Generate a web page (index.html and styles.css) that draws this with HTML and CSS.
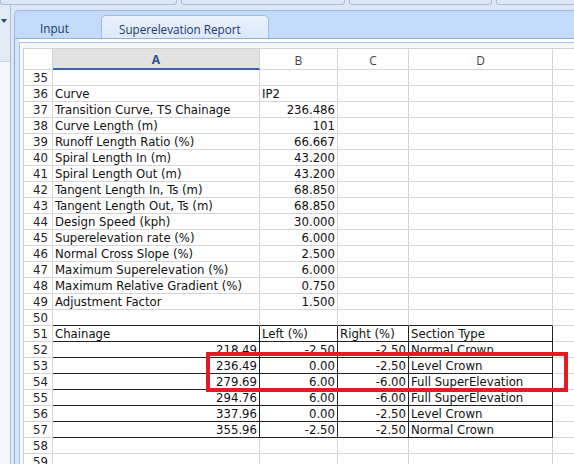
FILE: index.html
```html
<!DOCTYPE html>
<html lang="en">

<head>
	<meta charset="UTF-8">
	<title>Superelevation Report</title>
	<link rel="stylesheet" href="styles.css">
</head>

<body>

	<div class="topbar">
		<span class="top-btn btn-1"></span>
		<span class="top-btn btn-2"></span>
		<span class="top-btn btn-3"></span>
		<span class="top-btn btn-4"></span>
	</div>

	<div class="main">
		<aside class="side-panel">
			<div class="side-head"><span class="side-arrow"></span></div>
		</aside>

		<div class="workspace">
			<div class="tabstrip">
				<div class="tab tab-input">Input</div>
				<div class="tab tab-active">Superelevation Report</div>
			</div>

			<div class="sheet-frame">
				<div class="sheet-box">
					<table class="grid">
						<colgroup>
							<col class="col-rh">
							<col class="col-a">
							<col class="col-b">
							<col class="col-c">
							<col class="col-d">
							<col>
						</colgroup>
						<thead>
							<tr>
								<th class="corner"></th>
								<th class="sel">A</th>
								<th>B</th>
								<th>C</th>
								<th>D</th>
								<th></th>
							</tr>
						</thead>
						<tbody>
							<tr><td class="rh">35</td><td></td><td></td><td></td><td></td><td></td></tr>
							<tr><td class="rh">36</td><td>Curve</td><td>IP2</td><td></td><td></td><td></td></tr>
							<tr><td class="rh">37</td><td>Transition Curve, TS Chainage</td><td class="num">236.486</td><td></td><td></td><td></td></tr>
							<tr><td class="rh">38</td><td>Curve Length (m)</td><td class="num">101</td><td></td><td></td><td></td></tr>
							<tr><td class="rh">39</td><td>Runoff Length Ratio (%)</td><td class="num">66.667</td><td></td><td></td><td></td></tr>
							<tr><td class="rh">40</td><td>Spiral Length In (m)</td><td class="num">43.200</td><td></td><td></td><td></td></tr>
							<tr><td class="rh">41</td><td>Spiral Length Out (m)</td><td class="num">43.200</td><td></td><td></td><td></td></tr>
							<tr><td class="rh">42</td><td>Tangent Length In, Ts (m)</td><td class="num">68.850</td><td></td><td></td><td></td></tr>
							<tr><td class="rh">43</td><td>Tangent Length Out, Ts (m)</td><td class="num">68.850</td><td></td><td></td><td></td></tr>
							<tr><td class="rh">44</td><td>Design Speed (kph)</td><td class="num">30.000</td><td></td><td></td><td></td></tr>
							<tr><td class="rh">45</td><td>Superelevation rate (%)</td><td class="num">6.000</td><td></td><td></td><td></td></tr>
							<tr><td class="rh">46</td><td>Normal Cross Slope (%)</td><td class="num">2.500</td><td></td><td></td><td></td></tr>
							<tr><td class="rh">47</td><td>Maximum Superelevation (%)</td><td class="num">6.000</td><td></td><td></td><td></td></tr>
							<tr><td class="rh">48</td><td>Maximum Relative Gradient (%)</td><td class="num">0.750</td><td></td><td></td><td></td></tr>
							<tr><td class="rh">49</td><td>Adjustment Factor</td><td class="num">1.500</td><td></td><td></td><td></td></tr>
							<tr class="tbl-top"><td class="rh">50</td><td></td><td></td><td></td><td></td><td></td></tr>
							<tr class="tbl-row"><td class="rh">51</td><td>Chainage</td><td>Left (%)</td><td>Right (%)</td><td>Section Type</td><td></td></tr>
							<tr class="tbl-row"><td class="rh">52</td><td class="num">218.49</td><td class="num">-2.50</td><td class="num">-2.50</td><td>Normal Crown</td><td></td></tr>
							<tr class="tbl-row"><td class="rh">53</td><td class="num">236.49</td><td class="num">0.00</td><td class="num">-2.50</td><td>Level Crown</td><td></td></tr>
							<tr class="tbl-row"><td class="rh">54</td><td class="num">279.69</td><td class="num">6.00</td><td class="num">-6.00</td><td>Full SuperElevation</td><td></td></tr>
							<tr class="tbl-row"><td class="rh">55</td><td class="num">294.76</td><td class="num">6.00</td><td class="num">-6.00</td><td>Full SuperElevation</td><td></td></tr>
							<tr class="tbl-row"><td class="rh">56</td><td class="num">337.96</td><td class="num">0.00</td><td class="num">-2.50</td><td>Level Crown</td><td></td></tr>
							<tr class="tbl-row"><td class="rh">57</td><td class="num">355.96</td><td class="num">-2.50</td><td class="num">-2.50</td><td>Normal Crown</td><td></td></tr>
							<tr><td class="rh">58</td><td></td><td></td><td></td><td></td><td></td></tr>
							<tr><td class="rh">59</td><td></td><td></td><td></td><td></td><td></td></tr>
						</tbody>
					</table>
				</div>
			</div>
		</div>
	</div>

	<div class="highlight-box"></div>

</body>

</html>
```

FILE: styles.css
```css
body {
	margin: 0;
	width: 574px;
	height: 464px;
	overflow: hidden;
	background-color: #dde7f3;
	font-family: "DejaVu Sans Condensed", "DejaVu Sans", sans-serif;
	position: relative;
}

/* --- Top toolbar remnants --- */
.topbar {
	display: flex;
	gap: 4px;
	height: 5px;
}

.top-btn {
	box-sizing: border-box;
	flex-shrink: 0;
	height: 5px;
	background-color: #dbe7f6;
	border: 1px solid #a5bedd;
	border-top: none;
	border-radius: 0 0 3px 3px;
}

.btn-1 { width: 177px; }
.btn-2 { width: 164px; }
.btn-3 { width: 143px; }
.btn-4 { flex: 1; margin-right: -4px; }

.main {
	display: flex;
	height: 459px;
}

/* --- Left collapsed panel --- */
.side-panel {
	box-sizing: border-box;
	flex-shrink: 0;
	width: 11px;
	margin-right: 3px;
	background-color: #f3f6fa;
	border-right: 1px solid #a9bfdb;
}

.side-head {
	height: 57px;
	background-color: #e2eaf5;
	border-bottom: 1px solid #c9d6e6;
	padding-top: 14px;
	box-sizing: border-box;
}

.side-arrow {
	display: block;
	width: 0;
	height: 0;
	border-left: 3px solid transparent;
	border-right: 3px solid transparent;
	border-top: 4px solid #25487d;
	margin-left: 1px;
}

/* --- Tabs --- */
.workspace {
	flex: 1;
	min-width: 0;
	display: flex;
	flex-direction: column;
	padding-top: 5px;
}

.tabstrip {
	box-sizing: border-box;
	flex-shrink: 0;
	height: 29px;
	display: flex;
	align-items: flex-end;
	background-color: #c3dbf8;
	border-top: 1px solid #9ebde2;
	border-left: 1px solid #9ebde2;
	border-bottom: 1px solid #8fb2db;
	border-top-left-radius: 5px;
	font-family: "Open Sans", "Noto Sans", sans-serif;
	font-size: 11.7px;
	color: #1c3b66;
}

.tab {
	box-sizing: border-box;
	height: 23px;
	padding-top: 4px;
	line-height: 19px;
}

.tab-input {
	width: 86px;
	padding-left: 25px;
}

.tab-active {
	width: 168px;
	padding-left: 17px;
	background: linear-gradient(#e8f1fc, #dce9f9);
	border: 1px solid #9ebfe5;
	border-bottom: none;
	border-radius: 5px 5px 0 0;
}

/* --- Sheet frame --- */
.sheet-frame {
	flex: 1;
	min-height: 0;
	display: flex;
	padding: 3px 0 0 4px;
	background: linear-gradient(to right, #d4e4f7 4px, #ffffff 4px);
	border-left: 1px solid #8fb2db;
	overflow: hidden;
}

.sheet-box {
	flex: 1;
	min-width: 0;
	padding: 5px 0 0 3px;
	background-color: #f6f7f9;
	border-top: 1px solid #a9c6e6;
	border-left: 1px solid #a9c6e6;
	overflow: hidden;
}

/* --- Grid --- */
.grid {
	width: 560px;
	table-layout: fixed;
	border-collapse: separate;
	border-spacing: 0;
	background-color: #ffffff;
	border-top: 1px solid #d0d0d0;
	border-left: 1px solid #d0d0d0;
	font-size: 13px;
	color: #111;
}

.col-rh { width: 29px; }
.col-a { width: 207px; }
.col-b { width: 78px; }
.col-c { width: 71px; }
.col-d { width: 144px; }

.grid th,
.grid td {
	padding: 0 2px;
	border-right: 1px solid #d6d6d6;
	border-bottom: 1px solid #d6d6d6;
	white-space: nowrap;
	overflow: hidden;
	text-align: left;
	line-height: 15px;
}

.grid thead tr {
	height: 21px;
}

.grid tbody tr {
	height: 16px;
}

.grid th {
	font-family: "Open Sans", "Noto Sans", sans-serif;
	font-weight: normal;
	font-size: 12px;
	color: #444;
	text-align: center;
	padding-top: 2px;
}

.grid th.sel {
	background-color: #e2e2e2;
	color: #2c4f8f;
	font-weight: bold;
	border-bottom: 2px solid #3b64a6;
}

.grid td.rh {
	text-align: right;
	padding-right: 4px;
	color: #222;
}

.grid td.num {
	text-align: right;
}

/* --- Bordered result table (rows 51-57, columns A-D) --- */
.tbl-top td:nth-child(n+2):nth-child(-n+5) {
	border-bottom-color: #222;
}

.tbl-row td:nth-child(n+2):nth-child(-n+5) {
	border-right-color: #222;
	border-bottom-color: #222;
}

/* --- Red highlight drawn over rows 53-54 --- */
.highlight-box {
	position: absolute;
	left: 206px;
	top: 352px;
	width: 362px;
	height: 40px;
	box-sizing: border-box;
	border: 4px solid #e41b23;
}
```
